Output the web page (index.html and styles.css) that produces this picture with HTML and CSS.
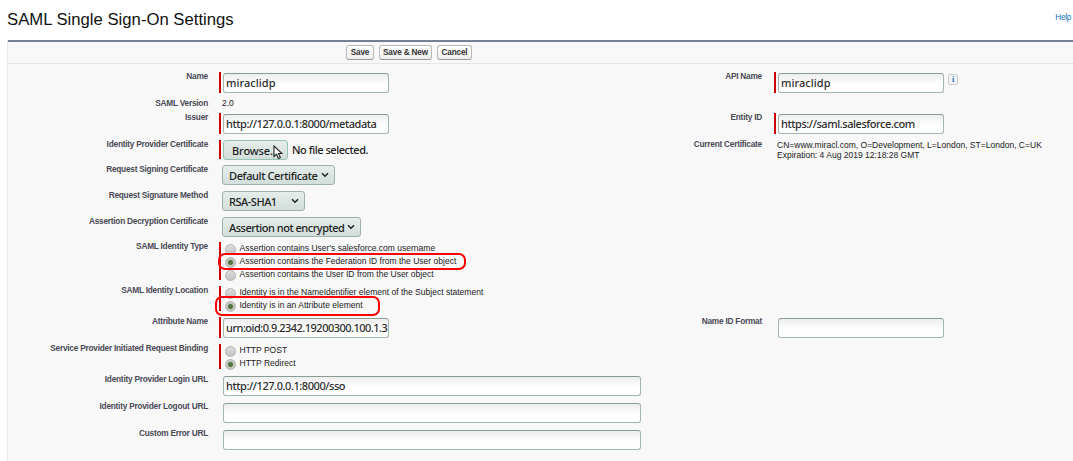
FILE: index.html
```html
<!DOCTYPE html>
<html lang="en">
<head>
  <meta charset="UTF-8">
  <meta name="viewport" content="width=device-width, initial-scale=1.0">
  <title>SAML Single Sign-On Settings</title>
  <link rel="stylesheet" href="styles.css">
</head>
<body>
  <header class="header">
    <h1>SAML Single Sign-On Settings</h1>
    <a class="help" href="#">Help</a>
  </header>
  <form class="panel">
    <div class="toolbar">
      <button type="button" class="btn save">Save</button>
      <button type="button" class="btn save-new">Save &amp; New</button>
      <button type="button" class="btn cancel">Cancel</button>
    </div>
    <div class="rows">
      <div class="row h27">
        <label class="label">Name</label>
        <div class="field required"><input class="text name" type="text" value="miraclidp"></div>
        <label class="label">API Name</label>
        <div class="field required"><input class="text name" type="text" value="miraclidp"><span class="info">i</span></div>
      </div>
      <div class="row h14">
        <label class="label">SAML Version</label>
        <div class="value">2.0</div>
      </div>
      <div class="row h27">
        <label class="label">Issuer</label>
        <div class="field required"><input class="text" type="text" value="http://127.0.0.1:8000/metadata"></div>
        <label class="label">Entity ID</label>
        <div class="field required"><input class="text" type="text" value="https://saml.salesforce.com"></div>
      </div>
      <div class="row h25">
        <label class="label">Identity Provider Certificate</label>
        <div class="field required file">
          <button type="button" class="control browse">Browse...</button>
          <span class="filename">No file selected.</span>
          <svg class="cursor" width="10" height="15" viewBox="0 0 10 15"><path d="M1 1v10.5l2.5-2.3 1.9 4.3 2-.9-1.9-4.1H9z" fill="#fff" stroke="#222" stroke-width="1.1"/></svg>
        </div>
        <label class="label">Current Certificate</label>
        <div class="value cert">CN=www.miracl.com, O=Development, L=London, ST=London, C=UK<br>Expiration: 4 Aug 2019 12:18:28 GMT</div>
      </div>
      <div class="row h26">
        <label class="label">Request Signing Certificate</label>
        <div class="field"><button type="button" class="control select w113"><span>Default Certificate</span><svg width="8" height="6" viewBox="0 0 8 6"><path d="M1 1.2l3 3 3-3" fill="none" stroke="#222" stroke-width="1.5"/></svg></button></div>
      </div>
      <div class="row h26">
        <label class="label">Request Signature Method</label>
        <div class="field"><button type="button" class="control select w83"><span>RSA-SHA1</span><svg width="8" height="6" viewBox="0 0 8 6"><path d="M1 1.2l3 3 3-3" fill="none" stroke="#222" stroke-width="1.5"/></svg></button></div>
      </div>
      <div class="row h25">
        <label class="label">Assertion Decryption Certificate</label>
        <div class="field"><button type="button" class="control select w139"><span>Assertion not encrypted</span><svg width="8" height="6" viewBox="0 0 8 6"><path d="M1 1.2l3 3 3-3" fill="none" stroke="#222" stroke-width="1.5"/></svg></button></div>
      </div>
      <div class="row h44">
        <label class="label">SAML Identity Type</label>
        <div class="field required radios">
          <label class="option"><input type="radio" name="type">Assertion contains User's salesforce.com username</label>
          <label class="option"><input type="radio" name="type" checked>Assertion contains the Federation ID from the User object</label>
          <label class="option"><input type="radio" name="type">Assertion contains the User ID from the User object</label>
          <span class="mark mark-type"></span>
        </div>
      </div>
      <div class="row h31">
        <label class="label">SAML Identity Location</label>
        <div class="field required radios">
          <label class="option"><input type="radio" name="location">Identity is in the NameIdentifier element of the Subject statement</label>
          <label class="option"><input type="radio" name="location" checked>Identity is in an Attribute element</label>
          <span class="mark mark-location"></span>
        </div>
      </div>
      <div class="row h27">
        <label class="label">Attribute Name</label>
        <div class="field required"><input class="text urn" type="text" value="urn:oid:0.9.2342.19200300.100.1.3"></div>
        <label class="label">Name ID Format</label>
        <div class="field"><input class="text" type="text"></div>
      </div>
      <div class="row h31">
        <label class="label">Service Provider Initiated Request Binding</label>
        <div class="field required radios">
          <label class="option"><input type="radio" name="binding">HTTP POST</label>
          <label class="option"><input type="radio" name="binding" checked>HTTP Redirect</label>
        </div>
      </div>
      <div class="row h27">
        <label class="label">Identity Provider Login URL</label>
        <div class="field"><input class="text long" type="text" value="http://127.0.0.1:8000/sso"></div>
      </div>
      <div class="row h27">
        <label class="label">Identity Provider Logout URL</label>
        <div class="field"><input class="text long" type="text"></div>
      </div>
      <div class="row h27">
        <label class="label">Custom Error URL</label>
        <div class="field"><input class="text long" type="text"></div>
      </div>
    </div>
  </form>
</body>
</html>
```
FILE: styles.css
```css
* {
  box-sizing: border-box;
}
body {
  margin: 0;
  height: 461px;
  overflow: hidden;
  display: flex;
  flex-direction: column;
  background: #fff;
  color: #222;
  font-family: "Liberation Sans", Arial, sans-serif;
  font-size: 8.53px;
}
.header {
  height: 40px;
  padding: 10px 2px 0 7px;
  display: flex;
  justify-content: space-between;
}
h1 {
  margin: 0;
  font-size: 16.7px;
  line-height: 20px;
  font-weight: normal;
  white-space: nowrap;
  color: #111;
}
.help {
  margin-top: 2px;
  font-size: 8.2px;
  line-height: 11px;
  letter-spacing: -0.3px;
  color: #1874bd;
  text-decoration: none;
}
.panel {
  flex: 1;
  margin-left: 7px;
  background: #f8f8f8;
  border-top: 2px solid #747e96;
  border-left: 1px solid #eaeaea;
  border-top-left-radius: 2px;
}
.toolbar {
  height: 22px;
  padding: 3px 0 0 338px;
  display: flex;
  gap: 5px;
  border-bottom: 1px solid #e6e6e6;
}
.btn {
  height: 15px;
  padding: 0;
  border: 1px solid #b9b9b9;
  border-bottom-color: #999;
  border-radius: 3px;
  background: linear-gradient(#fff, #eee);
  color: #333;
  font: bold 8.2px/12px "Liberation Sans", Arial, sans-serif;
  letter-spacing: -0.15px;
}
.save {
  width: 28px;
}
.save-new {
  width: 53px;
}
.cancel {
  width: 35px;
}
.rows {
  padding-top: 7px;
}
.row {
  display: grid;
  grid-template-columns: 200px 432px 101px 1fr;
  column-gap: 11px;
  align-items: start;
}
.h14 { height: 14px; }
.h25 { height: 25px; }
.h26 { height: 26px; }
.h27 { height: 27px; }
.h31 { height: 31px; }
.h44 { height: 44px; }
.label {
  font-size: 8.3px;
  font-weight: bold;
  line-height: 10px;
  letter-spacing: -0.24px;
  text-align: right;
  white-space: nowrap;
  color: #4a4a56;
}
.label:nth-child(3) {
  padding-right: 1px;
}
.field {
  display: flex;
  margin-top: 1px;
  border-left: 2px solid transparent;
  padding-left: 2px;
  position: relative;
}
.required {
  border-left-color: #c00;
}
.text {
  width: 166px;
  height: 20px;
  margin: 1px 0 0;
  padding: 0 0 1px 2px;
  border: 1px solid #a3b5ae;
  border-top-color: #8b9c95;
  border-radius: 3px;
  background: linear-gradient(#eee, #fff 60%);
  color: #2c2c2c;
  font: 500 11px "Noto Sans", Ubuntu, sans-serif;
  letter-spacing: -0.44px;
}
.name {
  letter-spacing: 0.05px;
}
.urn {
  letter-spacing: -0.52px;
}
.long {
  width: 418px;
}
.info {
  width: 10px;
  height: 11px;
  margin: 2px 0 0 4px;
  border: 1px solid #ccc;
  border-radius: 2px;
  background: #f1f5fa;
  color: #1874bd;
  font: bold 8px/9px "Liberation Serif", serif;
  text-align: center;
}
.value {
  padding-left: 3px;
  line-height: 10px;
  white-space: nowrap;
}
.cert {
  padding-top: 1px;
}
.control {
  height: 20px;
  padding: 0 5px;
  border: 1px solid #9fb1aa;
  border-radius: 3px;
  background: linear-gradient(#e6edea, #d2deda);
  color: #222;
  font: 500 11px/17px "Noto Sans", Ubuntu, sans-serif;
  letter-spacing: -0.48px;
  white-space: nowrap;
}
.select {
  display: flex;
  justify-content: space-between;
  align-items: center;
  margin-left: -1px;
  padding-left: 6px;
}
.select svg {
  flex: none;
}
.w113 { width: 113px; letter-spacing: -0.38px; }
.w83 { width: 83px; }
.w139 { width: 139px; }
.file {
  height: 19px;
}
.browse {
  width: 65px;
  padding: 0 8px;
  text-align: left;
  letter-spacing: -0.1px;
  border-color: #93c4b2;
}
.filename {
  margin-left: 4px;
  font: 500 11px/20px "Noto Sans", Ubuntu, sans-serif;
  letter-spacing: -0.46px;
}
.cursor {
  position: absolute;
  left: 52px;
  top: 5px;
}
.radios {
  flex-direction: column;
}
.option {
  display: flex;
  height: 13px;
  line-height: 13px;
  white-space: nowrap;
}
.option:last-of-type {
  height: 12px;
}
.option input {
  appearance: none;
  flex: none;
  width: 11px;
  height: 11px;
  margin: 2px 3.5px 0 2px;
  border: 1px solid #b2b2b2;
  border-radius: 50%;
  background: linear-gradient(#ddd, #c4c4c4);
}
.option input:checked {
  background: radial-gradient(circle, #55743f 0 2px, #bcc3b8 3px, #d2d2d2 5px);
}
/* red outlines around the chosen options */
.mark {
  position: absolute;
  border: 2px solid #f00;
  border-radius: 7px;
}
.mark-type {
  left: -3px;
  top: 11px;
  width: 248px;
  height: 17px;
}
.mark-location {
  left: -6px;
  top: 10px;
  width: 165px;
  height: 20px;
}
```
